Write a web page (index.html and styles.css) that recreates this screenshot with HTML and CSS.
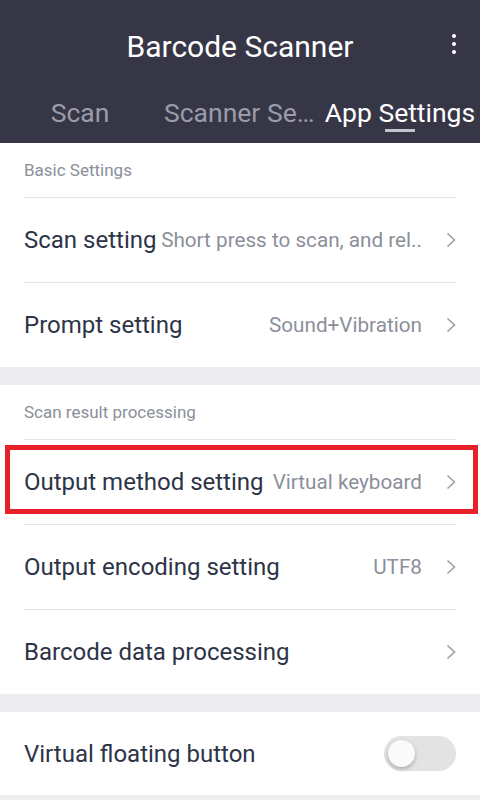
FILE: index.html
```html
<!DOCTYPE html>
<html lang="en">
<head>
    <meta charset="UTF-8">
    <meta name="viewport" content="width=device-width, initial-scale=1.0">
    <title>Barcode Scanner</title>
    <link rel="stylesheet" href="styles.css">
</head>
<body>
    <header class="appbar">
        <div class="titlebar">
            <h1 class="title">Barcode Scanner</h1>
            <button class="menu-btn" aria-label="More options">
                <span></span><span></span><span></span>
            </button>
        </div>
        <nav class="tabs">
            <div class="tab">Scan</div>
            <div class="tab">Scanner Settings</div>
            <div class="tab active">App Settings</div>
        </nav>
    </header>

    <main>
        <section class="group">
            <div class="group-title">Basic Settings</div>
            <div class="row">
                <span class="label">Scan setting</span>
                <span class="value">Short press to scan, and rel..</span>
                <svg class="chevron" viewBox="0 0 10 16"><polyline points="1.5,1.5 8.5,8 1.5,14.5"/></svg>
            </div>
            <div class="row">
                <span class="label">Prompt setting</span>
                <span class="value">Sound+Vibration</span>
                <svg class="chevron" viewBox="0 0 10 16"><polyline points="1.5,1.5 8.5,8 1.5,14.5"/></svg>
            </div>
        </section>

        <section class="group">
            <div class="group-title">Scan result processing</div>
            <div class="row">
                <span class="label">Output method setting</span>
                <span class="value">Virtual keyboard</span>
                <svg class="chevron" viewBox="0 0 10 16"><polyline points="1.5,1.5 8.5,8 1.5,14.5"/></svg>
                <span class="highlight"></span>
            </div>
            <div class="row">
                <span class="label">Output encoding setting</span>
                <span class="value">UTF8</span>
                <svg class="chevron" viewBox="0 0 10 16"><polyline points="1.5,1.5 8.5,8 1.5,14.5"/></svg>
            </div>
            <div class="row">
                <span class="label">Barcode data processing</span>
                <span class="value"></span>
                <svg class="chevron" viewBox="0 0 10 16"><polyline points="1.5,1.5 8.5,8 1.5,14.5"/></svg>
            </div>
        </section>

        <section class="group">
            <div class="row first">
                <span class="label">Virtual floating button</span>
                <span class="value"></span>
                <span class="switch"><span class="knob"></span></span>
            </div>
        </section>
    </main>
</body>
</html>
```

FILE: styles.css
```css
:root {
    --header-bg: #363647;
    --text-color: #2d3447;
    --muted: #8b8f9a;
    --divider: #e5e5e8;
    --band: #ededef;
}

body {
    font-family: Roboto, "Noto Sans", Arial, sans-serif;
    background: var(--band);
    color: var(--text-color);
    margin: 0;
    padding: 0;
}

.appbar {
    background: var(--header-bg);
    color: white;
}
.titlebar {
    height: 92px;
    display: flex;
    align-items: center;
    justify-content: center;
    position: relative;
}
.title {
    margin: 0;
    font-size: 30px;
    font-weight: 400;
}
.menu-btn {
    position: absolute;
    right: 18px;
    top: 30px;
    width: 16px;
    height: 28px;
    padding: 0;
    border: none;
    background: none;
    display: flex;
    flex-direction: column;
    align-items: center;
    justify-content: center;
    gap: 4px;
}
.menu-btn span {
    width: 4px;
    height: 4px;
    border-radius: 50%;
    background: white;
}

.tabs {
    height: 51px;
    display: grid;
    grid-template-columns: repeat(3, 1fr);
}
.tab {
    padding: 6px 2px 0;
    font-size: 26.5px;
    line-height: 30px;
    color: #9a9ca8;
    text-align: center;
    white-space: nowrap;
    overflow: hidden;
    text-overflow: ellipsis;
    position: relative;
}
.tab:nth-child(2) {
    text-align: left;
    padding-left: 4px;
}
.tab.active {
    color: white;
}
.tab.active::after {
    content: "";
    position: absolute;
    left: 50%;
    bottom: 11px;
    width: 30px;
    height: 3px;
    margin-left: -15px;
    background: #c3c4cc;
}

.group {
    background: white;
    margin-bottom: 18px;
}
.group-title {
    height: 54px;
    padding: 0 24px;
    display: flex;
    align-items: center;
    font-size: 17px;
    color: var(--muted);
}

.row {
    margin: 0 24px;
    height: 84px;
    border-top: 1px solid var(--divider);
    display: flex;
    align-items: center;
    gap: 4px;
    position: relative;
}
.row.first {
    border-top: none;
    height: 83px;
}
.label {
    flex: none;
    font-size: 24px;
}
.value {
    flex: 1 1 auto;
    text-align: right;
    font-size: 20.7px;
    color: var(--muted);
    white-space: nowrap;
}
.chevron {
    flex: none;
    width: 10px;
    height: 16px;
    margin-left: 20px;
    fill: none;
    stroke: #9b9ea8;
    stroke-width: 1.6;
}

.highlight {
    position: absolute;
    left: -19px;
    right: -22px;
    top: 5px;
    bottom: 10px;
    border: 5px solid #e8202a;
}

.switch {
    flex: none;
    width: 72px;
    height: 35px;
    border-radius: 18px;
    background: #e3e3e3;
    position: relative;
}
.knob {
    position: absolute;
    left: 4px;
    top: 4px;
    width: 27px;
    height: 27px;
    border-radius: 50%;
    background: #fafafa;
    box-shadow: 0 2px 4px rgba(0, 0, 0, 0.25);
}
```
